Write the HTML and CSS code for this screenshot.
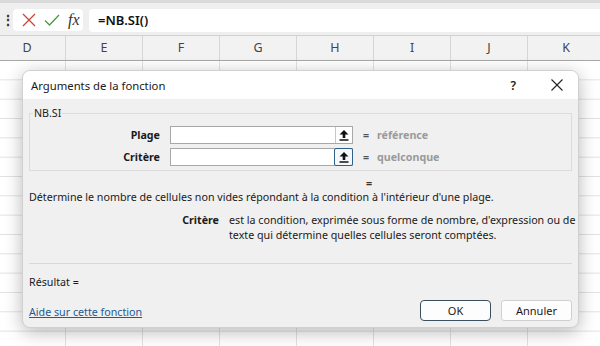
FILE: index.html
```html
<!DOCTYPE html>
<html lang="fr">
<head>
  <meta charset="UTF-8">
  <title>Arguments de la fonction</title>
  <link rel="stylesheet" href="styles.css">
</head>
<body>
  <div class="sheet">
    <div class="formula-bar">
      <span class="grip">&#8942;</span>
      <div class="fx-tools">
        <svg class="tool-icon" width="14" height="14" viewBox="0 0 14 14">
          <path d="M1 1 L13 13 M13 1 L1 13" stroke="#d0443a" stroke-width="1.3" fill="none"/>
        </svg>
        <svg class="tool-icon" width="16" height="14" viewBox="0 0 16 14">
          <path d="M1 7.5 L5.5 12 L15 2" stroke="#4a9a46" stroke-width="1.3" fill="none"/>
        </svg>
        <span class="fx">fx</span>
      </div>
      <div class="formula-input">=NB.SI()</div>
    </div>

    <div class="col-headers">
      <div>D</div>
      <div>E</div>
      <div>F</div>
      <div>G</div>
      <div>H</div>
      <div>I</div>
      <div>J</div>
      <div>K</div>
    </div>

    <div class="cells"></div>
  </div>

  <div class="dialog">
    <div class="dialog-title">
      <span>Arguments de la fonction</span>
      <div class="title-actions">
        <span class="help">?</span>
        <svg width="12" height="12" viewBox="0 0 12 12">
          <path d="M0.5 0.5 L11.5 11.5 M11.5 0.5 L0.5 11.5" stroke="#222" stroke-width="1.1" fill="none"/>
        </svg>
      </div>
    </div>

    <div class="dialog-body">
      <fieldset class="args">
        <legend>NB.SI</legend>
        <div class="arg-row">
          <label>Plage</label>
          <div class="ref-input">
            <span class="ref-btn">
              <svg width="10" height="11" viewBox="0 0 10 11"><path d="M5 0 L9.5 4.5 L6.3 4.5 L6.3 8 L3.7 8 L3.7 4.5 L0.5 4.5 Z M0.5 9.3 H9.5 V10.8 H0.5 Z" fill="#111"/></svg>
            </span>
          </div>
          <span class="eq">=</span>
          <span class="arg-val">référence</span>
        </div>
        <div class="arg-row">
          <label>Critère</label>
          <div class="ref-input">
            <span class="ref-btn focused">
              <svg width="10" height="11" viewBox="0 0 10 11"><path d="M5 0 L9.5 4.5 L6.3 4.5 L6.3 8 L3.7 8 L3.7 4.5 L0.5 4.5 Z M0.5 9.3 H9.5 V10.8 H0.5 Z" fill="#111"/></svg>
            </span>
          </div>
          <span class="eq">=</span>
          <span class="arg-val">quelconque</span>
        </div>
      </fieldset>

      <div class="result-eq">=</div>
      <p class="desc">Détermine le nombre de cellules non vides répondant à la condition à l'intérieur d'une plage.</p>

      <div class="arg-help">
        <strong>Critère</strong>
        <p>est la condition, exprimée sous forme de nombre, d'expression ou de texte qui détermine quelles cellules seront comptées.</p>
      </div>

      <hr class="sep">

      <div class="result">Résultat =</div>

      <div class="dialog-footer">
        <a href="#" class="help-link">Aide sur cette fonction</a>
        <div class="buttons">
          <button class="btn primary">OK</button>
          <button class="btn">Annuler</button>
        </div>
      </div>
    </div>
  </div>
</body>
</html>
```

FILE: styles.css
```css
body {
  margin: 0;
  width: 600px;
  height: 346px;
  overflow: hidden;
  position: relative;
  background: #ffffff;
  font-family: 'Noto Sans', 'Open Sans', sans-serif;
  font-size: 10.7px;
  color: #1a1a1a;
}

/* spreadsheet behind the dialog */

.formula-bar {
  height: 32px;
  border-top: 3px solid #dadada;
  border-bottom: 1px solid #d2d2d2;
  background: #efefef;
  display: flex;
  align-items: center;
}

.grip {
  width: 12px;
  font-size: 14px;
  font-weight: 700;
  color: #333;
  text-align: left;
  padding-left: 1px;
}

.fx-tools {
  width: 70px;
  height: 22px;
  margin-top: 2px;
  background: #ffffff;
  border-radius: 4px;
  display: flex;
  align-items: center;
  gap: 8px;
  padding-left: 9px;
  box-sizing: border-box;
}

.tool-icon { flex: none; }

.fx {
  font-family: 'Liberation Serif', serif;
  font-style: italic;
  font-size: 16px;
  color: #333;
}

.formula-input {
  flex: 1;
  height: 23px;
  margin-left: 6px;
  margin-top: 2px;
  background: #ffffff;
  border-radius: 4px 0 0 4px;
  padding-left: 9px;
  font-size: 13px;
  font-weight: 600;
  line-height: 23px;
  color: #111;
}

.col-headers {
  height: 24px;
  margin-left: -11px;
  display: grid;
  grid-template-columns: repeat(8, 77px);
  background: #f2f2f2;
  border-bottom: 1px solid #a8a8a8;
}

.col-headers div {
  border-right: 1px solid #d6d6d6;
  text-align: center;
  line-height: 24px;
  font-size: 12.5px;
  color: #444;
}

.cells {
  height: 286px;
  margin-left: -11px;
  background-image:
    linear-gradient(to right, #e2e2e2 1px, transparent 1px),
    linear-gradient(to bottom, transparent 18.33px, #e2e2e2 18.33px);
  background-size: 77px 100%, 100% 19.33px;
  background-position: 76px 0, 0 0;
}

/* function arguments dialog */

.dialog {
  position: absolute;
  left: 22px;
  top: 70px;
  width: 557px;
  height: 258px;
  border-radius: 8px;
  background: #f0f0f0;
  border: 1px solid #d0d0d0;
  box-sizing: border-box;
  box-shadow: 0 4px 18px rgba(0, 0, 0, 0.28);
  overflow: hidden;
}

.dialog-title {
  height: 28px;
  background: #ffffff;
  display: flex;
  align-items: center;
  justify-content: space-between;
  padding: 0 15px 0 8px;
  font-size: 11.3px;
}

.title-actions {
  display: flex;
  align-items: center;
  gap: 35px;
}

.help {
  font-size: 12px;
  font-weight: 600;
}

.dialog-body {
  padding: 0 6px;
}

.args {
  margin: 7px 0 0;
  height: 65px;
  box-sizing: border-box;
  border: 1px solid #dcdcdc;
  padding: 6px 0 0;
  display: flex;
  flex-direction: column;
  gap: 4px;
}

.args legend {
  padding: 0 1px;
  margin-left: 3px;
  color: #222;
}

.arg-row {
  display: flex;
  align-items: center;
  height: 18px;
}

.arg-row label {
  width: 130px;
  text-align: right;
  font-weight: 700;
  padding-right: 10px;
}

.ref-input {
  width: 183px;
  height: 18px;
  box-sizing: border-box;
  border: 1px solid #a8a8a8;
  background: #ffffff;
  display: flex;
  justify-content: flex-end;
}

.ref-btn {
  width: 17px;
  height: 16px;
  box-sizing: border-box;
  border-left: 1px solid #c8c8c8;
  display: flex;
  align-items: center;
  justify-content: center;
}

.ref-btn.focused {
  border: 1px solid #2f5f8a;
  border-radius: 2px;
  height: 18px;
  width: 19px;
  margin: -1px -1px 0 0;
  background: #f4f8fb;
}

.eq {
  margin-left: 10px;
  width: 14px;
  font-weight: 700;
  color: #555;
}

.arg-val {
  font-weight: 700;
  color: #9a9a9a;
}

.result-eq {
  margin: 5px 0 0 337px;
  font-weight: 700;
  color: #333;
  line-height: 14px;
}

.desc {
  margin: 0;
  line-height: 15px;
}

.arg-help {
  display: flex;
  margin-top: 8px;
  gap: 10px;
}

.arg-help strong {
  width: 190px;
  text-align: right;
  flex: none;
}

.arg-help p {
  margin: 0 -10px 0 0;
  line-height: 15px;
}

.sep {
  margin: 20px 0 0;
  border: none;
  border-top: 1px solid #d8d8d8;
}

.result {
  margin-top: 11px;
  line-height: 15px;
}

.dialog-footer {
  display: flex;
  justify-content: space-between;
  align-items: center;
  margin-top: 10px;
}

.help-link {
  color: #1f5a96;
  text-decoration: underline;
  margin-top: 2px;
}

.buttons {
  display: flex;
  gap: 10px;
}

.btn {
  width: 71px;
  height: 21px;
  font-family: inherit;
  font-size: 11px;
  background: #fdfdfd;
  border: 1px solid #d0d0d0;
  border-radius: 3px;
  color: #1a1a1a;
  padding: 0;
}

.btn.primary {
  border: 1px solid #3b4f5e;
  border-radius: 4px;
}
```
